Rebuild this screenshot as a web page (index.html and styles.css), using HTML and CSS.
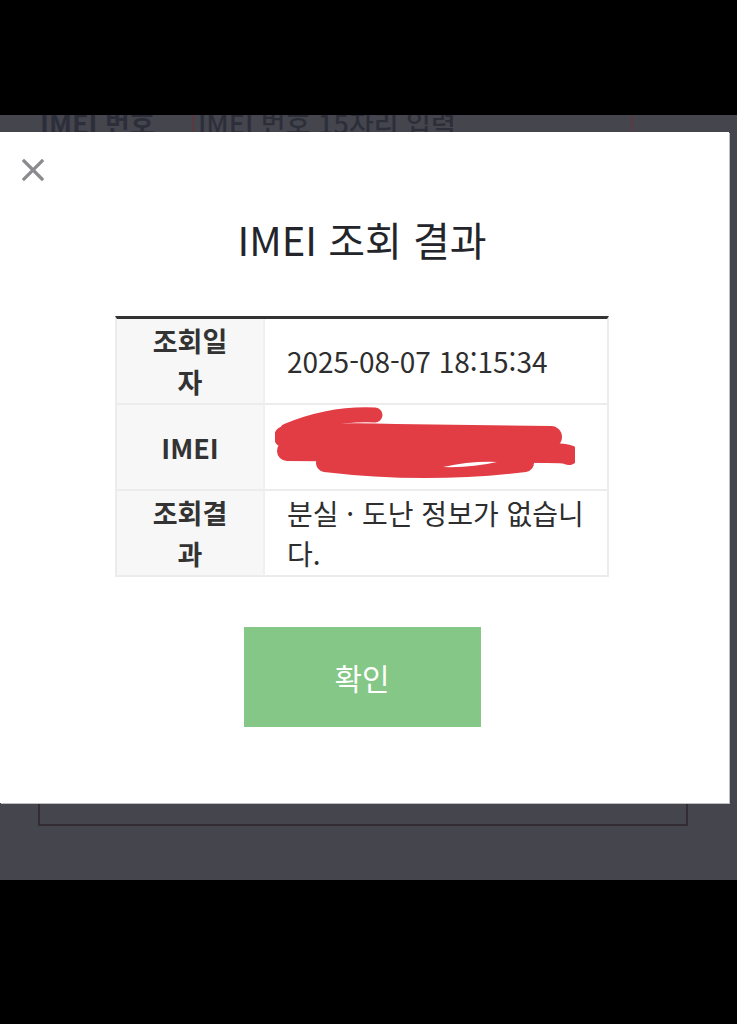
FILE: index.html
```html
<!DOCTYPE html>
<html lang="ko">
<head>
<meta charset="utf-8">
<title>IMEI 조회 결과</title>
<link rel="stylesheet" href="styles.css">
</head>
<body>
<div class="screen">
  <div class="topbar"></div>
  <div class="backdrop">
    <div class="page">
      <div class="field-row">
        <span class="field-label">IMEI 번호</span>
        <div class="field-input">IMEI 번호 15자리 입력</div>
      </div>
      <div class="page-box"></div>
    </div>

    <div class="modal">
      <div class="modal-inner">
        <div class="modal-head">
          <svg class="close" width="22" height="22" viewBox="0 0 22 22" aria-label="닫기">
            <path d="M2 2 L20 20 M20 2 L2 20" stroke="#8b8b8f" stroke-width="3.2" stroke-linecap="square" fill="none"/>
          </svg>
        </div>
        <h1 class="title">IMEI 조회 결과</h1>
        <div class="result">
          <div class="cell label">조회일자</div>
          <div class="cell value">2025-08-07 18:15:34</div>
          <div class="cell label">IMEI</div>
          <div class="cell value redacted">
            <svg width="300" height="80" viewBox="0 0 300 80">
              <g fill="none" stroke="#e23c45" stroke-linecap="round" stroke-linejoin="round">
                <path d="M12 24 Q55 6 100 8" stroke-width="15"/>
                <path d="M10 30 Q60 26 120 28 L276 30" stroke-width="22"/>
                <path d="M12 44 L272 46 Q290 46 294 48" stroke-width="20"/>
                <path d="M50 56 Q150 68 250 56" stroke-width="18"/>
              </g>
              <path d="M168 60 Q195 54 222 55 Q196 61 168 60 Z" fill="#ffffff"/>
            </svg>
          </div>
          <div class="cell label">조회결과</div>
          <div class="cell value">분실 · 도난 정보가 없습니다.</div>
        </div>
        <button class="confirm" type="button">확인</button>
      </div>
    </div>
  </div>
  <div class="bottombar"></div>
</div>
</body>
</html>
```

FILE: styles.css
```css
* {
  box-sizing: border-box;
}

html, body {
  margin: 0;
  padding: 0;
  background: #000;
}

body {
  font-family: "Noto Sans CJK KR", "Noto Sans", sans-serif;
  color: #333;
}

.screen {
  width: 737px;
  height: 1024px;
  display: flex;
  flex-direction: column;
  overflow: hidden;
}

.topbar {
  height: 115px;
  background: #000;
  flex: none;
}

.backdrop {
  height: 765px;
  flex: none;
  background: #45454d;
  position: relative;
  overflow: hidden;
}

.page {
  padding-left: 38px;
  padding-right: 49px;
}

.field-row {
  margin-top: -18px;
  height: 52px;
  display: flex;
  align-items: center;
}

.field-label {
  width: 154px;
  padding-left: 2px;
  font-size: 27px;
  font-weight: 700;
  color: #2c2f3a;
  line-height: 36px;
}

.field-input {
  width: 441px;
  height: 52px;
  border-left: 2px solid #5a3940;
  border-right: 2px solid #5a3940;
  padding-left: 4px;
  font-size: 27px;
  font-weight: 500;
  line-height: 36px;
  color: #2c2f3a;
  display: flex;
  align-items: center;
}

.page-box {
  margin-top: 454px;
  height: 223px;
  width: 650px;
  border: 2px solid #332c33;
}

.modal {
  position: absolute;
  left: 0;
  top: 17px;
  width: 729px;
  height: 671px;
  background: #fff;
  box-shadow: 1px 1px 0 #bdbdc2;
  padding-right: 5px;
}

.modal-inner {
  display: flex;
  flex-direction: column;
  align-items: center;
}

.modal-head {
  align-self: stretch;
  padding: 27px 0 0 22px;
  height: 49px;
}

.close {
  display: block;
}

.title {
  margin: 33px 0 0;
  font-size: 40px;
  font-weight: 400;
  line-height: 50px;
  color: #23252b;
}

.result {
  margin-top: 52px;
  width: 494px;
  display: grid;
  grid-template-columns: 148px 1fr;
  grid-auto-rows: 86px;
  border-top: 3px solid #333;
  border-left: 2px solid #ececec;
  border-right: 2px solid #ececec;
}

.cell {
  border-bottom: 2px solid #ececec;
  display: flex;
  align-items: center;
}

.label {
  background: #f7f7f7;
  border-right: 2px solid #f0f0f0;
  justify-content: center;
  text-align: center;
  padding: 0 24px;
  font-size: 27px;
  font-weight: 700;
  line-height: 41px;
  color: #333;
}

.value {
  padding: 0 14px 0 22px;
  font-size: 28px;
  font-weight: 400;
  line-height: 40px;
  color: #2e2e2e;
}

.redacted {
  padding-left: 10px;
}

.redacted svg {
  display: block;
}

.confirm {
  margin-top: 50px;
  width: 237px;
  height: 100px;
  border: none;
  background: #84c786;
  color: #fff;
  font-family: "Noto Sans CJK KR", "Noto Sans", sans-serif;
  font-size: 30px;
  font-weight: 400;
  padding: 0;
}

.bottombar {
  flex: 1;
  background: #000;
}
```
